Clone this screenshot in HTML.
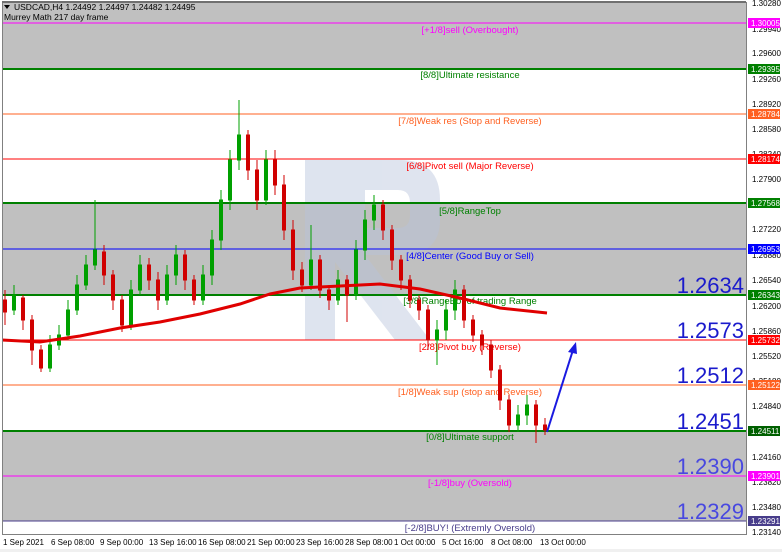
<!DOCTYPE html>
<html><head><meta charset="utf-8"><style>
body{margin:0;width:782px;height:552px;background:#fff;font-family:"Liberation Sans",sans-serif;overflow:hidden;position:relative}
svg{position:absolute;left:0;top:0}
</style></head><body>
<svg width="782" height="552" xmlns="http://www.w3.org/2000/svg" font-family="Liberation Sans, sans-serif">
<rect x="0" y="0" width="782" height="552" fill="#fff"/>
<!-- gray bands -->
<rect x="2" y="2" width="744" height="67" fill="#c0c0c0"/>
<rect x="2" y="203" width="744" height="92" fill="#c0c0c0"/>
<rect x="2" y="431" width="744" height="90" fill="#c0c0c0"/>
<!-- watermark -->
<g fill="#b8c4dc" opacity="0.45">
<rect x="305" y="160" width="30" height="180"/>
<path d="M335 160 H400 Q440 160 440 200 V220 Q440 255 400 255 H365 L430 340 H395 L335 262 Z M365 190 V228 H398 Q410 228 410 215 V203 Q410 190 398 190 Z"/>
</g>
<!-- level lines -->
<g stroke-width="1">
<line x1="2" y1="23" x2="746" y2="23" stroke="#ff00ff"/>
<line x1="2" y1="69" x2="746" y2="69" stroke="#008000" stroke-width="2"/>
<line x1="2" y1="114" x2="746" y2="114" stroke="#ff6020"/>
<line x1="2" y1="159" x2="746" y2="159" stroke="#ff0000"/>
<line x1="2" y1="203" x2="746" y2="203" stroke="#008000" stroke-width="2"/>
<line x1="2" y1="249" x2="746" y2="249" stroke="#0000ff"/>
<line x1="2" y1="295" x2="746" y2="295" stroke="#008000" stroke-width="2"/>
<line x1="2" y1="340" x2="746" y2="340" stroke="#ff0000"/>
<line x1="2" y1="385" x2="746" y2="385" stroke="#ff6020"/>
<line x1="2" y1="431" x2="746" y2="431" stroke="#008000" stroke-width="2"/>
<line x1="2" y1="476" x2="746" y2="476" stroke="#ff00ff"/>
<line x1="2" y1="521" x2="746" y2="521" stroke="#483d8b"/>
</g>
<!-- level labels -->
<g font-size="9.5" text-anchor="middle">
<text x="470" y="33" fill="#ff00ff">[+1/8]sell (Overbought)</text>
<text x="470" y="78" fill="#008000">[8/8]Ultimate resistance</text>
<text x="470" y="124" fill="#ff6020">[7/8]Weak res (Stop and Reverse)</text>
<text x="470" y="169" fill="#ff0000">[6/8]Pivot sell (Major Reverse)</text>
<text x="470" y="214" fill="#008000">[5/8]RangeTop</text>
<text x="470" y="259" fill="#0000ff">[4/8]Center (Good Buy or Sell)</text>
<text x="470" y="304" fill="#008000">[3/8]RangeBot of trading Range</text>
<text x="470" y="350" fill="#ff0000">[2/8]Pivot buy (Reverse)</text>
<text x="470" y="395" fill="#ff6020">[1/8]Weak sup (stop and Reverse)</text>
<text x="470" y="440" fill="#008000">[0/8]Ultimate support</text>
<text x="470" y="486" fill="#ff00ff">[-1/8]buy (Oversold)</text>
<text x="470" y="531" fill="#483d8b">[-2/8]BUY! (Extremly Oversold)</text>
</g>
<!-- candles -->
<g stroke-width="1" id="c">
<g stroke="#d00000" fill="#d00000">
<line x1="5" y1="290" x2="5" y2="325"/><rect x="3.5" y="300" width="3" height="12"/>
<line x1="23" y1="295" x2="23" y2="330"/><rect x="21.5" y="298" width="3" height="22"/>
<line x1="32" y1="315" x2="32" y2="365"/><rect x="30.5" y="320" width="3" height="30"/>
<line x1="41" y1="345" x2="41" y2="372"/><rect x="39.5" y="350" width="3" height="18"/>
<line x1="104" y1="245" x2="104" y2="285"/><rect x="102.5" y="252" width="3" height="23"/>
<line x1="113" y1="270" x2="113" y2="310"/><rect x="111.5" y="275" width="3" height="25"/>
<line x1="122" y1="295" x2="122" y2="332"/><rect x="120.5" y="300" width="3" height="25"/>
<line x1="149" y1="258" x2="149" y2="290"/><rect x="147.5" y="265" width="3" height="15"/>
<line x1="158" y1="272" x2="158" y2="310"/><rect x="156.5" y="280" width="3" height="20"/>
<line x1="185" y1="250" x2="185" y2="290"/><rect x="183.5" y="255" width="3" height="25"/>
<line x1="194" y1="275" x2="194" y2="305"/><rect x="192.5" y="280" width="3" height="20"/>
<line x1="248" y1="130" x2="248" y2="180"/><rect x="246.5" y="135" width="3" height="35"/>
<line x1="257" y1="160" x2="257" y2="210"/><rect x="255.5" y="170" width="3" height="30"/>
<line x1="275" y1="150" x2="275" y2="195"/><rect x="273.5" y="160" width="3" height="25"/>
<line x1="284" y1="175" x2="284" y2="240"/><rect x="282.5" y="185" width="3" height="45"/>
<line x1="293" y1="220" x2="293" y2="280"/><rect x="291.5" y="230" width="3" height="40"/>
<line x1="302" y1="262" x2="302" y2="292"/><rect x="300.5" y="270" width="3" height="15"/>
<line x1="320" y1="255" x2="320" y2="298"/><rect x="318.5" y="260" width="3" height="30"/>
<line x1="329" y1="285" x2="329" y2="310"/><rect x="327.5" y="290" width="3" height="10"/>
<line x1="347" y1="275" x2="347" y2="322"/><rect x="345.5" y="280" width="3" height="15"/>
<line x1="383" y1="200" x2="383" y2="240"/><rect x="381.5" y="205" width="3" height="25"/>
<line x1="392" y1="225" x2="392" y2="270"/><rect x="390.5" y="230" width="3" height="30"/>
<line x1="401" y1="255" x2="401" y2="290"/><rect x="399.5" y="260" width="3" height="20"/>
<line x1="410" y1="275" x2="410" y2="308"/><rect x="408.5" y="280" width="3" height="20"/>
<line x1="419" y1="295" x2="419" y2="320"/><rect x="417.5" y="300" width="3" height="10"/>
<line x1="428" y1="305" x2="428" y2="350"/><rect x="426.5" y="310" width="3" height="30"/>
<line x1="464" y1="285" x2="464" y2="328"/><rect x="462.5" y="290" width="3" height="30"/>
<line x1="473" y1="315" x2="473" y2="342"/><rect x="471.5" y="320" width="3" height="15"/>
<line x1="482" y1="330" x2="482" y2="355"/><rect x="480.5" y="335" width="3" height="10"/>
<line x1="491" y1="340" x2="491" y2="378"/><rect x="489.5" y="345" width="3" height="25"/>
<line x1="500" y1="365" x2="500" y2="410"/><rect x="498.5" y="370" width="3" height="30"/>
<line x1="509" y1="395" x2="509" y2="432"/><rect x="507.5" y="400" width="3" height="25"/>
<line x1="536" y1="400" x2="536" y2="443"/><rect x="534.5" y="405" width="3" height="20"/>
<line x1="545" y1="418" x2="545" y2="435"/><rect x="543.5" y="425" width="3" height="5"/>
</g>
<g stroke="#00a000" fill="#00a000">
<line x1="14" y1="285" x2="14" y2="315"/><rect x="12.5" y="295" width="3" height="15"/>
<line x1="50" y1="335" x2="50" y2="372"/><rect x="48.5" y="345" width="3" height="23"/>
<line x1="59" y1="325" x2="59" y2="350"/><rect x="57.5" y="335" width="3" height="10"/>
<line x1="68" y1="300" x2="68" y2="340"/><rect x="66.5" y="310" width="3" height="25"/>
<line x1="77" y1="275" x2="77" y2="315"/><rect x="75.5" y="285" width="3" height="25"/>
<line x1="86" y1="255" x2="86" y2="290"/><rect x="84.5" y="265" width="3" height="20"/>
<line x1="95" y1="200" x2="95" y2="270"/><rect x="93.5" y="250" width="3" height="15"/>
<line x1="131" y1="280" x2="131" y2="330"/><rect x="129.5" y="290" width="3" height="35"/>
<line x1="140" y1="255" x2="140" y2="295"/><rect x="138.5" y="265" width="3" height="25"/>
<line x1="167" y1="265" x2="167" y2="305"/><rect x="165.5" y="275" width="3" height="25"/>
<line x1="176" y1="245" x2="176" y2="285"/><rect x="174.5" y="255" width="3" height="20"/>
<line x1="203" y1="265" x2="203" y2="305"/><rect x="201.5" y="275" width="3" height="25"/>
<line x1="212" y1="230" x2="212" y2="285"/><rect x="210.5" y="240" width="3" height="35"/>
<line x1="221" y1="190" x2="221" y2="250"/><rect x="219.5" y="200" width="3" height="40"/>
<line x1="230" y1="150" x2="230" y2="210"/><rect x="228.5" y="160" width="3" height="40"/>
<line x1="239" y1="100" x2="239" y2="170"/><rect x="237.5" y="135" width="3" height="25"/>
<line x1="266" y1="150" x2="266" y2="205"/><rect x="264.5" y="160" width="3" height="40"/>
<line x1="311" y1="225" x2="311" y2="290"/><rect x="309.5" y="260" width="3" height="25"/>
<line x1="338" y1="270" x2="338" y2="305"/><rect x="336.5" y="280" width="3" height="20"/>
<line x1="356" y1="240" x2="356" y2="300"/><rect x="354.5" y="250" width="3" height="45"/>
<line x1="365" y1="210" x2="365" y2="260"/><rect x="363.5" y="220" width="3" height="30"/>
<line x1="374" y1="195" x2="374" y2="230"/><rect x="372.5" y="205" width="3" height="15"/>
<line x1="437" y1="320" x2="437" y2="365"/><rect x="435.5" y="330" width="3" height="10"/>
<line x1="446" y1="300" x2="446" y2="340"/><rect x="444.5" y="310" width="3" height="20"/>
<line x1="455" y1="280" x2="455" y2="320"/><rect x="453.5" y="290" width="3" height="20"/>
<line x1="518" y1="405" x2="518" y2="432"/><rect x="516.5" y="415" width="3" height="10"/>
<line x1="527" y1="395" x2="527" y2="425"/><rect x="525.5" y="405" width="3" height="10"/>
</g>
</g>
<!-- MA -->
<path d="M2 340 L40 342 L80 336 L120 328 L160 322 L200 314 L240 304 L270 294 L300 288 L340 286 L380 284 L420 289 L460 298 L500 308 L547 313" fill="none" stroke="#e00000" stroke-width="3"/>
<!-- arrow -->
<line x1="547" y1="432" x2="573" y2="350" stroke="#1a1ae0" stroke-width="2"/>
<path d="M576 342 L568 352 L577 354 Z" fill="#1a1ae0"/>
<!-- big numbers -->
<g font-size="22" text-anchor="end" fill="#1a1acc">
<text x="744" y="293">1.2634</text>
<text x="744" y="338">1.2573</text>
<text x="744" y="383">1.2512</text>
<text x="744" y="429">1.2451</text>
<text x="744" y="474" fill="#4848e0">1.2390</text>
<text x="744" y="519" fill="#4848e0">1.2329</text>
</g>
<!-- frame -->
<rect x="2.5" y="2.5" width="744" height="532" fill="none" stroke="#808080"/>
<line x1="2" y1="2" x2="746" y2="2" stroke="#707070" stroke-width="2"/>
<text x="14" y="10" font-size="8.5" fill="#000">USDCAD,H4  1.24492 1.24497 1.24482 1.24495</text>
<path d="M4 5 L10 5 L7 9 Z" fill="#000"/>
<text x="4" y="20" font-size="8.5" fill="#000">Murrey Math 217 day frame</text>
<!-- right axis -->
<g font-size="8" fill="#000">
<text x="752" y="6">1.30280</text><text x="752" y="32">1.29940</text><text x="752" y="56">1.29600</text><text x="752" y="82">1.29260</text><text x="752" y="107">1.28920</text><text x="752" y="132">1.28580</text><text x="752" y="157">1.28240</text><text x="752" y="182">1.27900</text><text x="752" y="232">1.27220</text><text x="752" y="258">1.26880</text><text x="752" y="283">1.26540</text><text x="752" y="309">1.26200</text><text x="752" y="334">1.25860</text><text x="752" y="359">1.25520</text><text x="752" y="384">1.25180</text><text x="752" y="409">1.24840</text><text x="752" y="460">1.24160</text><text x="752" y="485">1.23820</text><text x="752" y="510">1.23480</text><text x="752" y="535">1.23140</text>
</g>
<g font-size="8" fill="#fff">
<rect x="748" y="18" width="32" height="10" fill="#ff00ff"/><text x="751" y="26">1.30005</text>
<rect x="748" y="64" width="32" height="10" fill="#008000"/><text x="751" y="72">1.29395</text>
<rect x="748" y="109" width="32" height="10" fill="#ff6020"/><text x="751" y="117">1.28784</text>
<rect x="748" y="154" width="32" height="10" fill="#ff0000"/><text x="751" y="162">1.28174</text>
<rect x="748" y="198" width="32" height="10" fill="#008000"/><text x="751" y="206">1.27568</text>
<rect x="748" y="244" width="32" height="10" fill="#0000ff"/><text x="751" y="252">1.26953</text>
<rect x="748" y="290" width="32" height="10" fill="#008000"/><text x="751" y="298">1.26343</text>
<rect x="748" y="335" width="32" height="10" fill="#ff0000"/><text x="751" y="343">1.25732</text>
<rect x="748" y="380" width="32" height="10" fill="#ff6020"/><text x="751" y="388">1.25122</text>
<rect x="748" y="426" width="32" height="10" fill="#006000"/><text x="751" y="434">1.24511</text>
<rect x="748" y="471" width="32" height="10" fill="#ff00ff"/><text x="751" y="479">1.23901</text>
<rect x="748" y="516" width="32" height="10" fill="#483d8b"/><text x="751" y="524">1.23291</text>
</g>
<!-- bottom axis -->
<g font-size="8" fill="#000">
<text x="3" y="545">1 Sep 2021</text><text x="51" y="545">6 Sep 08:00</text><text x="100" y="545">9 Sep 00:00</text><text x="149" y="545">13 Sep 16:00</text><text x="198" y="545">16 Sep 08:00</text><text x="247" y="545">21 Sep 00:00</text><text x="296" y="545">23 Sep 16:00</text><text x="345" y="545">28 Sep 08:00</text><text x="394" y="545">1 Oct 00:00</text><text x="442" y="545">5 Oct 16:00</text><text x="491" y="545">8 Oct 08:00</text><text x="540" y="545">13 Oct 00:00</text>
</g>
<rect x="0" y="549" width="782" height="3" fill="#f0f0f0"/>
</svg>
</body></html>
